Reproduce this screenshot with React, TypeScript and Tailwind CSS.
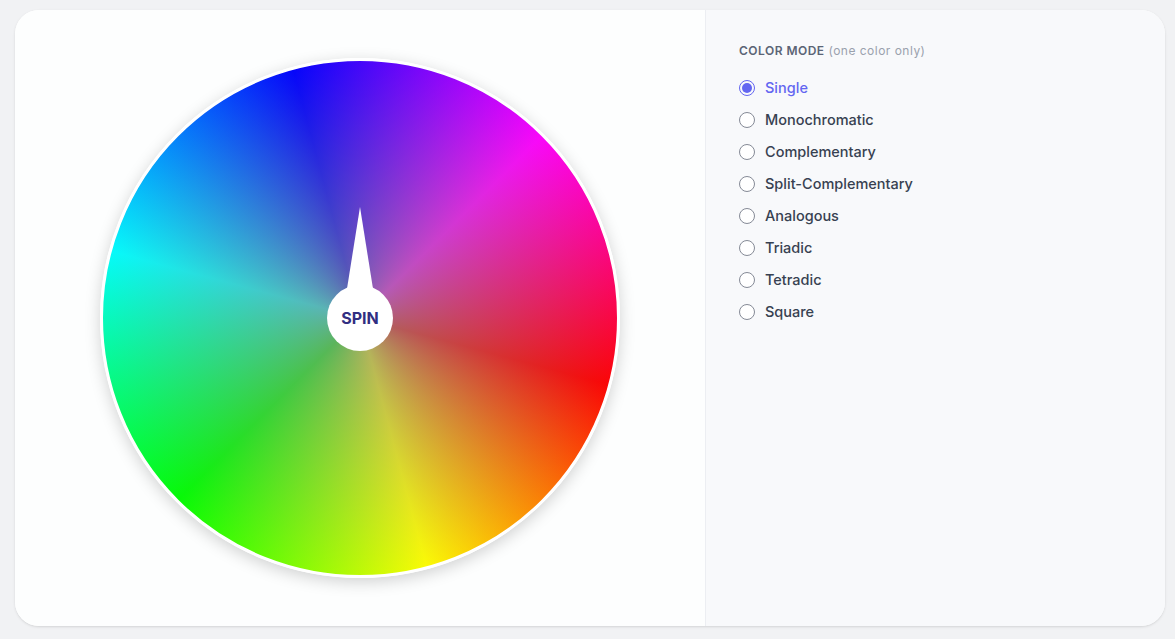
const modes = ["Single", "Monochromatic", "Complementary", "Split-Complementary", "Analogous", "Triadic", "Tetradic", "Square"];

export default function App() {
  return (
    <div className="w-[1175px] h-[639px] bg-[#f1f2f4] pt-[10px] pl-[15px]" style={{ fontFamily: "Inter, 'Noto Sans', sans-serif" }}>
      <div className="w-[1150px] h-[616px] rounded-[24px] bg-white flex overflow-hidden shadow-sm">
        <div className="w-[690px] h-full flex items-center justify-center bg-[#fdfefe]">
          <div className="relative w-[520px] h-[520px] rounded-full border-[3px] border-white shadow-[0_4px_16px_rgba(0,0,0,0.18)] bg-[conic-gradient(from_105deg,#ff0000,#ffff00,#00ff00,#00ffff,#0000ff,#ff00ff,#ff0000)] flex items-center justify-center">
            <div className="absolute inset-0 rounded-full bg-[radial-gradient(circle,rgba(140,140,140,0.75)_0%,rgba(140,140,140,0.35)_40%,rgba(140,140,140,0)_75%)]" />
            <div className="relative w-[66px] h-[66px] rounded-full bg-white flex items-center justify-center">
              <div className="absolute left-1/2 -translate-x-1/2 top-[-78px] w-0 h-0 border-l-[14px] border-r-[14px] border-b-[88px] border-l-transparent border-r-transparent border-b-white" />
              <span className="relative text-[16px] font-bold text-[#312e81]">SPIN</span>
            </div>
          </div>
        </div>
        <div className="flex-1 bg-[#f8f9fb] border-l border-[#eceef2] pl-[33px] pt-[32px]">
          <div className="text-[12px] tracking-[0.04em] mb-[12px]">
            <span className="font-semibold text-[#5b6475]">COLOR MODE</span>{" "}
            <span className="text-[#9aa1ad]">(one color only)</span>
          </div>
          <div className="flex flex-col">
            {modes.map((m, i) => (
              <label key={m} className="flex items-center gap-[10px] h-[32px]">
                {i === 0 ? (
                  <span className="w-[16px] h-[16px] rounded-full border-[1.5px] border-[#6366f1] flex items-center justify-center">
                    <span className="w-[10px] h-[10px] rounded-full bg-[#6366f1]" />
                  </span>
                ) : (
                  <span className="w-[16px] h-[16px] rounded-full border-[1.5px] border-[#858a96] bg-white" />
                )}
                <span className={`text-[14.5px] font-medium ${i === 0 ? "text-[#6366f1]" : "text-[#374151]"}`}>{m}</span>
              </label>
            ))}
          </div>
        </div>
      </div>
    </div>
  );
}
